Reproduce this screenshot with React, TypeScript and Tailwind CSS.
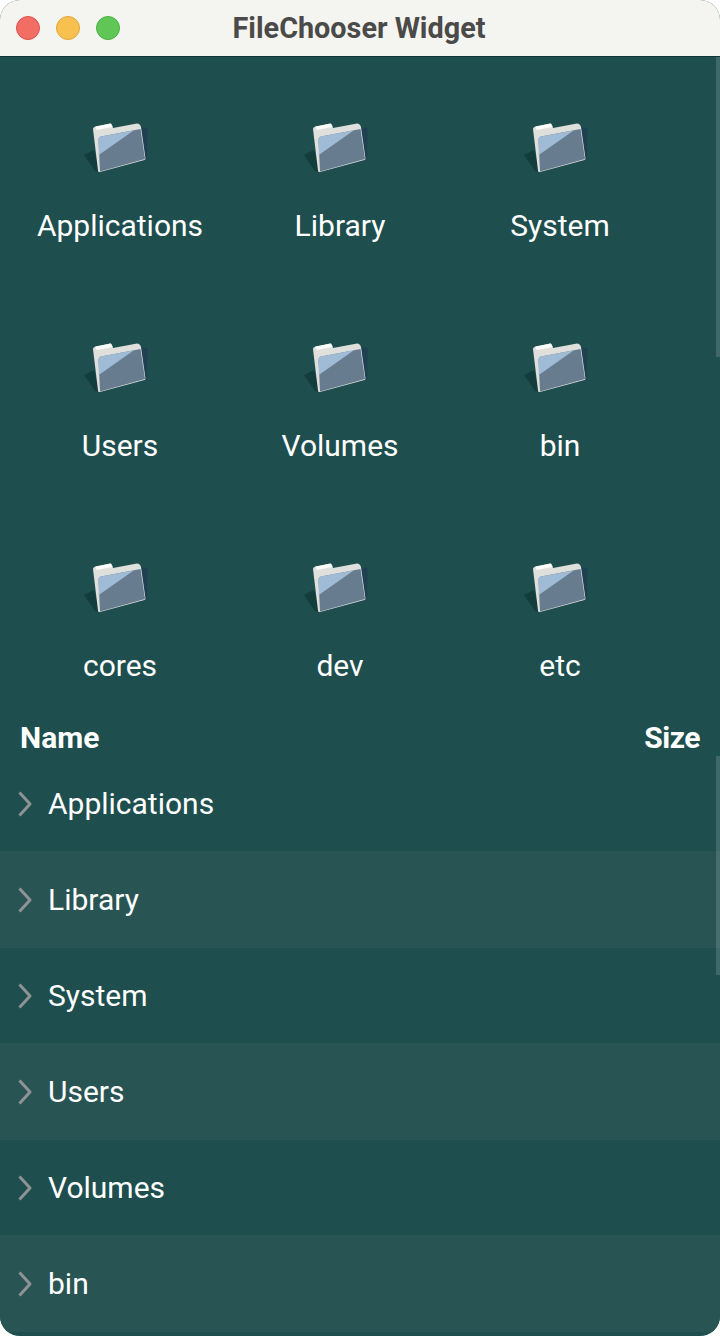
const items = ["Applications", "Library", "System", "Users", "Volumes", "bin", "cores", "dev", "etc"];
const rows = [
  { name: "Applications", cls: "h-[95px] bg-[#1e4e4e]" },
  { name: "Library", cls: "h-[97px] bg-[#295454]" },
  { name: "System", cls: "h-[95px] bg-[#1e4e4e]" },
  { name: "Users", cls: "h-[97px] bg-[#295454]" },
  { name: "Volumes", cls: "h-[95px] bg-[#1e4e4e]" },
  { name: "bin", cls: "h-[97px] bg-[#295454]" },
];

function Folder() {
  return (
    <svg width="80" height="80" viewBox="10 0 80 80" className="block">
      <path d="M14 50 L24 45 L30 67 L25 66 Z" fill="#123a3b" opacity="0.85" />
      <path d="M66 22 L77.5 23 L77 54 L68 57.5 Z" fill="#1f3f52" opacity="0.9" />
      <path d="M23 24 Q23 22 25 22 L40 18.5 Q42 18.5 43 23 L67 18.5 Q70 18.5 71 22 L75.5 53.5 Q75.5 54.5 74.5 55 L30 67 Q28 67.5 28 65.5 Z" fill="#dfdfdc" />
      <path d="M25 21.5 L41 18.5 L42.5 22 L27 25 Z" fill="#fbfbfa" />
      <path d="M28.5 35 Q28.5 32 31 31.5 L70.5 24 L75 54 L30 66.5 Z" fill="#687c90" />
      <path d="M28.5 35 Q28.5 32 31 31.5 L64 25.2 L28.8 50 Z" fill="#9fbbd5" />
    </svg>
  );
}

function Chevron() {
  return (
    <svg width="16" height="26" viewBox="0 0 16 26" className="block">
      <path d="M2.5 1.5 L13 13 L2.5 24.5" fill="none" stroke="#8f9393" strokeWidth="3" strokeLinejoin="round" />
    </svg>
  );
}

export default function App() {
  return (
    <div className="bg-white w-[720px] h-[1336px] overflow-hidden font-['Roboto',sans-serif]">
      <div className="relative w-full h-full rounded-[20px] overflow-hidden flex flex-col bg-[#1e4e4e] text-white">
        <header className="relative h-[57px] shrink-0 bg-[#f4f4f0] border-b border-[#0f3536] flex items-center justify-center pr-[2px]">
          <div className="absolute left-[16px] top-[16px] flex gap-[16px]">
            <span className="block w-[24px] h-[24px] rounded-full bg-[#f26d64] border border-[#d9544e]" />
            <span className="block w-[24px] h-[24px] rounded-full bg-[#f7c04f] border border-[#e0a63c]" />
            <span className="block w-[24px] h-[24px] rounded-full bg-[#60c656] border border-[#4bb043]" />
          </div>
          <h1 className="text-[28.8px] font-bold text-[#4a4a48] leading-none">FileChooser Widget</h1>
        </header>

        <section className="h-[699px] shrink-0 pl-[10px] grid grid-cols-[220px_220px_220px] auto-rows-[220px] content-start">
          {items.map((n) => (
            <div key={n} className="flex flex-col items-center pt-[48px]">
              <Folder />
              <span className="text-[30px] leading-[34px] mt-[24px]">{n}</span>
            </div>
          ))}
        </section>

        <div className="absolute left-0 right-0 top-[721px] px-[20px] flex justify-between text-[30px] font-bold leading-[34px]">
          <span>Name</span>
          <span className="tracking-[-0.5px]">Size</span>
        </div>

        <section className="flex flex-col">
          {rows.map((r) => (
            <div key={r.name} className={`${r.cls} shrink-0 flex items-center pl-[17px] gap-[15px] text-[30px]`}>
              <Chevron />
              <span>{r.name}</span>
            </div>
          ))}
        </section>

        <div className="absolute right-0 top-[57px] w-[4px] h-[300px] bg-white/15" />
        <div className="absolute right-0 top-[756px] w-[4px] h-[219px] bg-white/15" />
      </div>
    </div>
  );
}
